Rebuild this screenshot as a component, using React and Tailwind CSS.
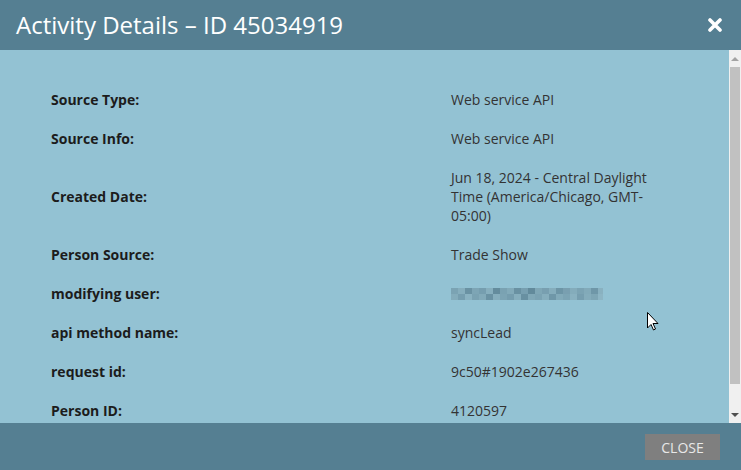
const rows = [
  { label: "Source Type:", value: "Web service API" },
  { label: "Source Info:", value: "Web service API" },
  {
    label: "Created Date:",
    value: "Jun 18, 2024 - Central Daylight Time (America/Chicago, GMT-05:00)",
  },
  { label: "Person Source:", value: "Trade Show" },
  { label: "modifying user:", blurred: true },
  { label: "api method name:", value: "syncLead" },
  { label: "request id:", value: "9c50#1902e267436" },
  { label: "Person ID:", value: "4120597" },
];

const blurCells = [
  "#7ba3b3", "#86aebd", "#6a92a3", "#7da5b5", "#769eaf", "#87afbe", "#648c9d", "#7aa2b2",
  "#82aab9", "#6991a2", "#779fb0", "#628a9b", "#7fa7b6", "#789fb0", "#85adbc", "#6d95a6",
  "#799fb0", "#84acbb", "#7ba3b3", "#82aab9", "#6f97a8", "#89b1c0",
];
const blurCells2 = [
  "#84acbb", "#769eaf", "#8ab2c1", "#7aa2b2", "#82aab9", "#6a92a3", "#86aebd", "#7ca4b4",
  "#759dae", "#86aebd", "#6890a1", "#80a8b7", "#7ba3b3", "#86aebd", "#6f97a8", "#82aab9",
  "#7ca4b4", "#89b1c0", "#769eaf", "#84acbb", "#7ea6b5", "#8db5c4",
];

function Blurred() {
  return (
    <svg width="152" height="12" viewBox="0 0 152 12" className="block">
      {blurCells.map((c, i) => (
        <rect key={"a" + i} x={i * 7} y="0" width="7" height="6" fill={c} />
      ))}
      {blurCells2.map((c, i) => (
        <rect key={"b" + i} x={i * 7} y="6" width="7" height="6" fill={c} />
      ))}
    </svg>
  );
}

export default function App() {
  return (
    <div className="relative flex h-[470px] w-[741px] flex-col overflow-hidden bg-[#93c2d3] font-['Open_Sans','Noto_Sans',sans-serif]">
      <div className="flex h-[50px] shrink-0 items-center justify-between bg-[#557f92] pl-4 pr-[19px]">
        <div className="text-[24px] leading-none text-white">Activity Details – ID 45034919</div>
        <svg width="14" height="14" viewBox="0 0 14 14">
          <path d="M2 2 L12 12 M12 2 L2 12" stroke="#fff" strokeWidth="3.6" strokeLinecap="round" />
        </svg>
      </div>

      <div className="flex min-h-0 flex-1">
        <div className="min-w-0 flex-1 overflow-hidden pl-[51px] pt-[30px]">
          <table className="border-collapse text-[14px] leading-[19px]">
            <tbody>
              {rows.map((r) => (
                <tr key={r.label}>
                  <td className="w-[400px] py-[10px] align-middle font-bold text-[#1c1c1c]">{r.label}</td>
                  <td className="w-[226px] py-[10px] align-middle text-[#333]">
                    {r.blurred ? <Blurred /> : r.value}
                  </td>
                </tr>
              ))}
            </tbody>
          </table>
        </div>

        <div className="flex w-[12px] shrink-0 flex-col bg-[#f0f0f0]">
          <div className="flex h-[17px] items-center justify-center">
            <div className="h-0 w-0 border-x-[4px] border-b-[4px] border-x-transparent border-b-[#a3a3a3]" />
          </div>
          <div className="mx-px h-[317px] bg-[#c1c1c1]" />
          <div className="flex flex-1 items-end justify-center pb-[6px]">
            <div className="h-0 w-0 border-x-[4px] border-t-[4px] border-x-transparent border-t-[#505050]" />
          </div>
        </div>
      </div>

      <div className="flex h-[47px] shrink-0 items-center justify-end bg-[#557f92] pr-[21px]">
        <button className="h-[26px] w-[75px] bg-[#7f7f7f] pt-px text-[14px] text-[#e8e8e8]">CLOSE</button>
      </div>

      <svg
        className="absolute left-[647px] top-[312px]"
        width="12"
        height="19"
        viewBox="0 0 12 19"
      >
        <path d="M0.5 0.5 L0.5 16 L4 12.5 L6.5 18 L8.5 17 L6 11.5 L11 11.5 Z" fill="#fff" stroke="#000" strokeWidth="1" />
      </svg>
    </div>
  );
}
